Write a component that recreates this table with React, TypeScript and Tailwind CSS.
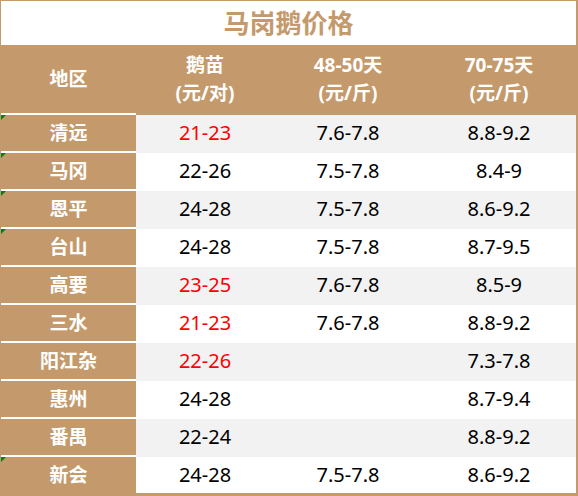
const TAN = "bg-[#c49a6c]";

type Row = {
  region: string;
  seed: string;
  mid: string;
  late: string;
  red?: boolean;
  mark?: boolean;
};

const rows: Row[] = [
  { region: "清远", seed: "21-23", mid: "7.6-7.8", late: "8.8-9.2", red: true, mark: true },
  { region: "马冈", seed: "22-26", mid: "7.5-7.8", late: "8.4-9", mark: true },
  { region: "恩平", seed: "24-28", mid: "7.5-7.8", late: "8.6-9.2", mark: true },
  { region: "台山", seed: "24-28", mid: "7.5-7.8", late: "8.7-9.5", mark: true },
  { region: "高要", seed: "23-25", mid: "7.6-7.8", late: "8.5-9", red: true },
  { region: "三水", seed: "21-23", mid: "7.6-7.8", late: "8.8-9.2", red: true },
  { region: "阳江杂", seed: "22-26", mid: "", late: "7.3-7.8", red: true },
  { region: "惠州", seed: "24-28", mid: "", late: "8.7-9.4" },
  { region: "番禺", seed: "22-24", mid: "", late: "8.8-9.2" },
  { region: "新会", seed: "24-28", mid: "7.5-7.8", late: "8.6-9.2", mark: true },
];

const COLS = "grid grid-cols-[135px_138px_148px_154px]";

function HeaderCell({ top, bottom }: { top: string; bottom?: string }) {
  return (
    <div className="flex flex-col items-center justify-center text-[19px] font-bold leading-[28px] text-white">
      <span>{top}</span>
      {bottom && <span>{bottom}</span>}
    </div>
  );
}

export default function App() {
  return (
    <div
      className={`w-[578px] h-[496px] ${TAN} pt-px pl-px pr-[2px] pb-[3px] text-black`}
      style={{ fontFamily: '"Noto Sans", "Noto Sans CJK SC", sans-serif' }}
    >
      {/* title */}
      <div className="h-[44px] bg-white flex items-center justify-center text-[26px] font-bold text-[#c49a6c]">
        马岗鹅价格
      </div>

      {/* header */}
      <div className={`${COLS} h-[68px] ${TAN}`}>
        <HeaderCell top="地区" />
        <HeaderCell top="鹅苗" bottom="(元/对)" />
        <HeaderCell top="48-50天" bottom="(元/斤)" />
        <HeaderCell top="70-75天" bottom="(元/斤)" />
      </div>

      {rows.map((r, i) => {
        const bg = i % 2 === 0 ? "bg-[#f2f2f2]" : "bg-white";
        const top = i === 0 ? "border-[#c49a6c]" : i % 2 === 0 ? "border-white" : "border-[#f2f2f2]";
        return (
          <div key={r.region} className={`${COLS} h-[38px]`}>
            <div
              className={`relative flex items-center justify-center border-t-2 border-white ${TAN} text-[19px] font-bold text-white`}
            >
              {r.mark && (
                <span className="absolute left-0 top-0 h-0 w-0 border-t-[5px] border-r-[5px] border-t-[#0a7a12] border-r-transparent" />
              )}
              {r.region}
            </div>
            {[r.seed, r.mid, r.late].map((v, j) => (
              <div
                key={j}
                className={`flex items-center justify-center border-t-2 ${top} ${bg} text-[20px] ${
                  j === 0 && r.red ? "text-[#ff0000]" : "text-black"
                }`}
              >
                {v}
              </div>
            ))}
          </div>
        );
      })}
    </div>
  );
}
